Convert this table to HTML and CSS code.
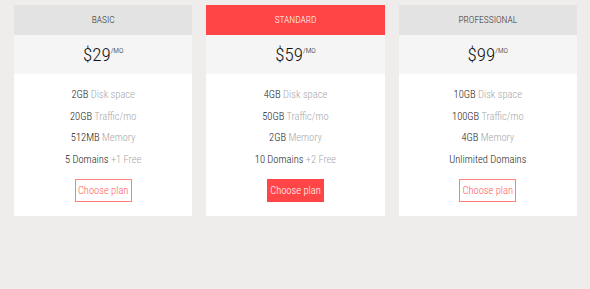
FILE: index.html
```html
<!DOCTYPE html>
<html>
<head>
<meta charset="utf-8">
<link rel="stylesheet" href="styles.css">
</head>
<body>
<div class="plans">
  <div class="card">
    <div class="head">BASIC</div>
    <div class="price">$29<sup>/MO</sup></div>
    <ul class="features">
      <li><b>2GB</b> Disk space</li>
      <li><b>20GB</b> Traffic/mo</li>
      <li><b>512MB</b> Memory</li>
      <li><b>5 Domains</b> +1 Free</li>
    </ul>
    <div class="action"><a class="btn">Choose plan</a></div>
  </div>
  <div class="card featured">
    <div class="head">STANDARD</div>
    <div class="price">$59<sup>/MO</sup></div>
    <ul class="features">
      <li><b>4GB</b> Disk space</li>
      <li><b>50GB</b> Traffic/mo</li>
      <li><b>2GB</b> Memory</li>
      <li><b>10 Domains</b> +2 Free</li>
    </ul>
    <div class="action"><a class="btn">Choose plan</a></div>
  </div>
  <div class="card">
    <div class="head">PROFESSIONAL</div>
    <div class="price">$99<sup>/MO</sup></div>
    <ul class="features">
      <li><b>10GB</b> Disk space</li>
      <li><b>100GB</b> Traffic/mo</li>
      <li><b>4GB</b> Memory</li>
      <li><b>Unlimited Domains</b></li>
    </ul>
    <div class="action"><a class="btn">Choose plan</a></div>
  </div>
</div>
</body>
</html>
```
FILE: styles.css
```css
html, body {
  margin: 0;
  padding: 0;
  background: #eeedeb;
  font-family: "Roboto Condensed", Roboto, sans-serif;
  font-stretch: 75%;
  font-weight: 300;
}
.plans {
  display: grid;
  grid-template-columns: repeat(3, 1fr);
  gap: 14px;
  padding: 5px 13px 0 14px;
}
.card {
  background: #fff;
  text-align: center;
  padding-bottom: 14px;
}
.head {
  height: 30px;
  line-height: 30px;
  background: #e3e3e3;
  color: #333;
  font-size: 9.5px;
}
.featured .head {
  background: #ff4545;
  color: #fff;
}
.price {
  height: 39px;
  line-height: 39px;
  background: #f5f5f5;
  color: #111;
  font-size: 19px;
}
.price sup {
  font-size: 7.5px;
  vertical-align: 0;
  position: relative;
  top: -8px;
}
.features {
  list-style: none;
  margin: 0;
  padding: 10px 0 0;
}
.features li {
  height: 21.7px;
  line-height: 21.7px;
  font-size: 10.5px;
  color: #a8a8a8;
}
.features b {
  font-weight: 300;
  color: #222;
}
.action {
  padding-top: 8px;
}
.btn {
  display: inline-block;
  white-space: nowrap;
  width: 55px;
  height: 21px;
  line-height: 21px;
  border: 1px solid #ff7f7f;
  color: #ff5a5a;
  font-size: 10.5px;
}
.featured .btn {
  background: #ff4545;
  border-color: #ff4545;
  color: #fff;
}
```
